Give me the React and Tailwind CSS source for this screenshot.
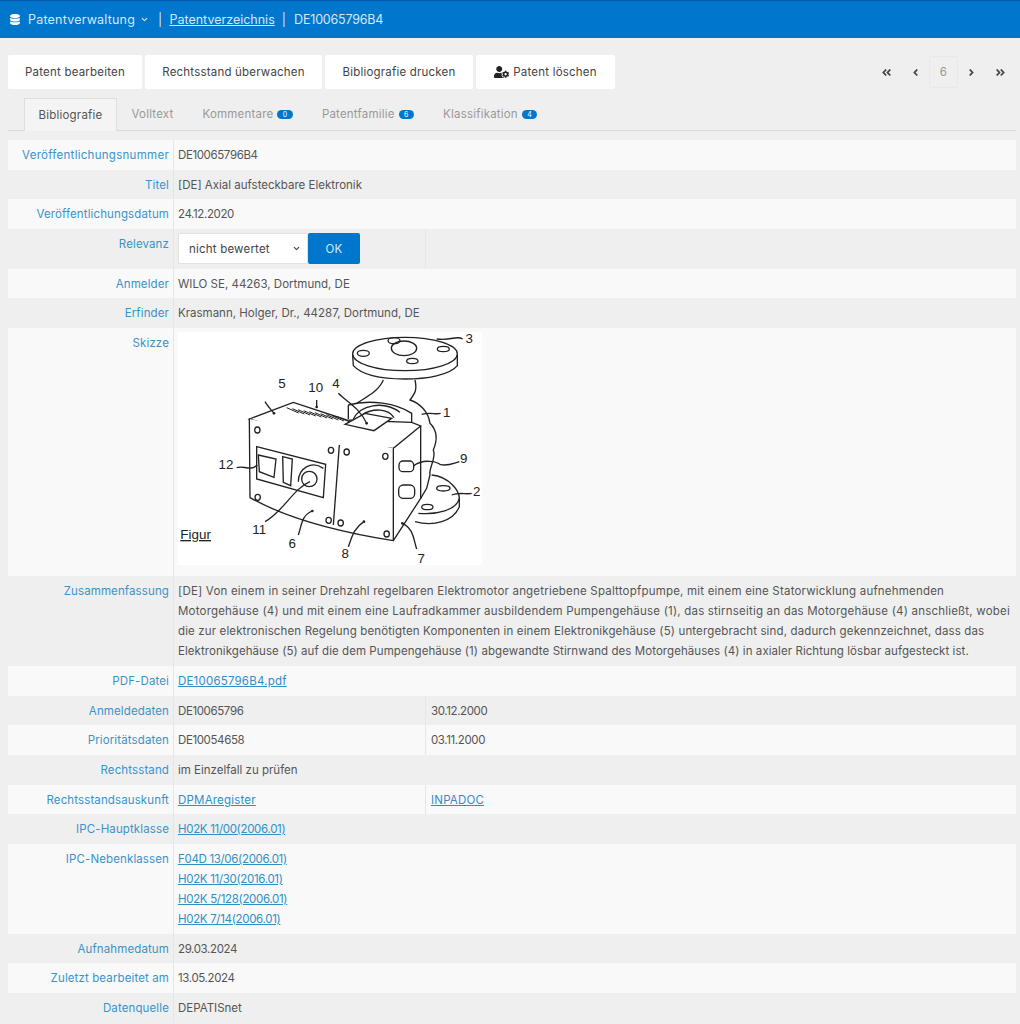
import { FaDatabase, FaUserCog, FaAngleDoubleLeft, FaAngleDoubleRight, FaAngleLeft, FaAngleRight } from "react-icons/fa";
import { ChevronDown } from "lucide-react";

const Link = ({ children, tight }) => <a className={`text-[#2f8fc8] underline ${tight ? "tracking-[-0.32px]" : ""}`}>{children}</a>;
const Num = ({ children }) => <span className="tracking-[-0.38px]">{children}</span>;
const Name = ({ children }) => <span className="tracking-[0px]">{children}</span>;

function Row({ label, odd, h, a, b, split }) {
  return (
    <div className={`grid grid-cols-[165px_253px_1fr] ${odd ? "bg-[#f9f9f9]" : "bg-[#efefef]"} ${h}`}>
      <div className="text-right text-[#3a93c9] pr-[4px] pt-[8px] tracking-[0.12px]">{label}</div>
      <div className={`border-l border-[#e6e6e6] pl-[4px] pt-[8px] ${split ? "border-r" : "col-span-2"}`}>{a}</div>
      {split && <div className="pl-[5px] pt-[8px]">{b}</div>}
    </div>
  );
}

function Sketch() {
  const vents = [0, 1, 2, 3, 4, 5, 6, 7, 8, 9];
  const holes = [[262, 315], [483, 376], [530, 381], [646, 394], [263, 517], [476, 586], [512, 594], [650, 627]];
  const labels = [["3", 898, 55], ["5", 336, 188], ["10", 437, 202], ["4", 498, 190], ["1", 830, 275], ["9", 881, 415], ["12", 168, 432], ["2", 920, 512], ["11", 268, 628], ["6", 367, 670], ["8", 526, 700], ["7", 754, 714]];
  return (
    <svg viewBox="24 21 912 699" className="w-[304px] h-[233px] bg-white block overflow-visible" fill="none" stroke="#222" strokeWidth="4">
      <ellipse cx="705" cy="87" rx="157" ry="50" />
      <path d="M548 90 L550 122 C580 155 650 162 705 162 C770 162 840 150 862 122 L862 90" />
      <ellipse cx="672" cy="47" rx="18" ry="9" />
      <ellipse cx="820" cy="72" rx="18" ry="8" />
      <ellipse cx="580" cy="85" rx="18" ry="9" />
      <ellipse cx="727" cy="108" rx="17" ry="8" />
      <ellipse cx="702" cy="70" rx="38" ry="22" />
      <path d="M640 165 C625 200 590 215 560 235" />
      <path d="M735 165 C742 195 735 205 720 225 C750 235 775 260 780 295 C800 315 805 340 790 375 C800 400 775 430 780 450 L770 490 L752 520" />
      <path d="M785 450 C840 455 868 500 868 520 L868 545 C850 590 790 605 735 590" />
      <path d="M868 520 C860 555 800 570 745 565" />
      <ellipse cx="820" cy="490" rx="20" ry="8" />
      <ellipse cx="772" cy="546" rx="17" ry="8" />
      <path d="M535 240 L535 282 M535 240 C600 222 680 235 725 265 L725 295" />
      <path d="M550 282 C570 240 640 225 690 262 M575 270 C610 248 655 250 672 278" />
      <path d="M238 282 L370 232 L530 285 L725 292 L752 303 L670 370 C520 360 350 320 238 282 Z" fill="#fff" />
      <path d="M525 298 L585 265 L665 280 L612 317 Z" fill="#fff" />
      <path d="M238 282 L240 518 C350 580 500 620 670 647 L670 370 M752 303 L752 520 L670 647" fill="#fff" />
      <path d="M508 360 L490 600" />
      {vents.map(i => <path key={i} d={`M${350 + i * 17} ${248 + i * 3} L${386 + i * 17} ${264 + i * 3}`} strokeWidth="3" />)}
      {holes.map(([x, y]) => <ellipse key={x} cx={x} cy={y} rx="8" ry="9" />)}
      <path d="M260 365 L467 418 L460 518 L260 462 Z" />
      <path d="M265 390 L318 402 L312 457 L268 440 Z" />
      <path d="M338 395 L367 402 L362 482 L340 472 Z" />
      <circle cx="418" cy="462" r="23" />
      <path d="M385 470 C385 430 425 405 460 430" />
      <rect x="687" y="408" width="44" height="32" rx="12" />
      <rect x="686" y="480" width="48" height="40" rx="14" />
      <path d="M878 42 C860 30 845 48 800 42 M312 265 C300 250 290 240 285 230 M440 245 L440 225 M590 295 C570 250 530 230 505 205 M812 265 C795 270 785 260 755 268 M730 423 C760 400 800 410 810 418 C830 425 850 415 868 410 M200 428 C220 420 240 440 262 420 M905 505 C890 510 870 500 845 510 M420 470 C370 490 340 560 285 590 M427 558 C395 570 395 600 385 630 M582 590 C550 610 545 640 535 665 M697 595 C730 610 730 640 740 672" />
      <g fill="#222" stroke="none" fontFamily="Liberation Sans, sans-serif" fontSize="40" textAnchor="middle">
        {labels.map(([t, x, y]) => <text key={t} x={x} y={y}>{t}</text>)}
        <text x="77" y="642" textDecoration="underline">Figur</text>
      </g>
      <g fill="#222" stroke="none">
        <circle cx="312" cy="265" r="4" /><circle cx="440" cy="246" r="4" /><circle cx="590" cy="295" r="4" /><circle cx="427" cy="558" r="4" /><circle cx="582" cy="590" r="4" /><circle cx="697" cy="595" r="4" />
      </g>
    </svg>
  );
}

export default function App() {
  const tabs = [["Volltext"], ["Kommentare", 0], ["Patentfamilie", 6], ["Klassifikation", 4]];
  return (
    <div className="w-[1020px] h-[1024px] overflow-hidden bg-[#efefef] text-[#555] text-[11.5px] leading-[14px] font-['Inter',sans-serif] tracking-[0.2px]">
      <div className="h-[38px] bg-[#0077cc] border-t border-[#0a55b0] flex items-center pl-[10px] text-[#d6e8f6] text-[12.5px]">
        <FaDatabase className="w-[10px] h-[11px] text-white mr-[8px]" />
        <span>Patentverwaltung</span>
        <ChevronDown className="w-[9px] h-[9px] ml-[5px]" strokeWidth={3} />
        <span className="ml-[9px]">|</span>
        <a className="ml-[7px] underline tracking-[0px]">Patentverzeichnis</a>
        <span className="ml-[7px]">|</span>
        <span className="ml-[8px] tracking-[-0.2px]">DE10065796B4</span>
      </div>

      <div className="flex items-center justify-between pl-[8px] pr-[14px] mt-[17px] h-[34px]">
        <div className="flex gap-[3px]">
          <button className="h-[34px] w-[134px] bg-white rounded-[2px] text-[#444]">Patent bearbeiten</button>
          <button className="h-[34px] w-[177px] bg-white rounded-[2px] text-[#444]">Rechtsstand überwachen</button>
          <button className="h-[34px] w-[148px] bg-white rounded-[2px] text-[#444]">Bibliografie drucken</button>
          <button className="h-[34px] w-[139px] bg-white rounded-[2px] text-[#444] flex items-center justify-center gap-[4px]">
            <FaUserCog className="w-[15px] h-[12px] text-[#222]" />Patent löschen
          </button>
        </div>
        <div className="flex items-center text-[#444]">
          <FaAngleDoubleLeft className="w-[11px] h-[11px]" />
          <FaAngleLeft className="w-[11px] h-[11px] ml-[18px]" />
          <span className="w-[29px] h-[32px] border border-[#e8e8e8] rounded-[2px] flex items-center justify-center text-[#999] ml-[8px]">6</span>
          <FaAngleRight className="w-[11px] h-[11px] ml-[8px]" />
          <FaAngleDoubleRight className="w-[11px] h-[11px] ml-[18px]" />
        </div>
      </div>

      <div className="flex mt-[9px] ml-[8px] mr-[4px] border-b border-[#d9d9d9] h-[33px] pl-[16px]">
        <div className="h-[33px] w-[93px] flex items-center justify-center bg-[#f4f4f4] border border-b-0 border-[#dedede] text-[#555]">Bibliografie</div>
        {tabs.map(([t, n]) => (
          <div key={t} className="flex items-center text-[#999] px-[14.5px]">
            {t}
            {n !== undefined && <span className="ml-[4px] w-[15.5px] h-[9px] rounded-full bg-[#0077cc] text-white text-[7px] leading-[9px] text-center">{n}</span>}
          </div>
        ))}
      </div>

      <div className="mt-[9px] ml-[8px] mr-[4px]">
        <Row odd h="h-[30px]" label={<span className="tracking-[0.28px]">Veröffentlichungsnummer</span>} a={<Num>DE10065796B4</Num>} />
        <Row h="h-[29px]" label="Titel" a={<Name>[DE] Axial aufsteckbare Elektronik</Name>} />
        <Row odd h="h-[30px]" label="Veröffentlichungsdatum" a={<Num>24.12.2020</Num>} />
        <Row h="h-[40px]" split label="Relevanz" a={
          <div className="flex -mt-[4px]">
            <div className="w-[130px] h-[31px] bg-white border border-[#e2e2e2] rounded-l-[2px] flex items-center justify-between pl-[10px] pr-[6px] text-[#444]">
              nicht bewertet<ChevronDown className="w-[9px] h-[9px]" strokeWidth={3} />
            </div>
            <div className="w-[52px] h-[31px] bg-[#0077cc] rounded-[2px] text-[#d6e8f6] flex items-center justify-center">OK</div>
          </div>
        } />
        <Row odd h="h-[29px]" label="Anmelder" a={<Name>WILO SE, 44263, Dortmund, DE</Name>} />
        <Row h="h-[30px]" label="Erfinder" a={<Name>Krasmann, Holger, Dr., 44287, Dortmund, DE</Name>} />
        <Row odd h="h-[248px]" label="Skizze" a={<div className="-mt-[4px]"><Sketch /></div>} />
        <Row h="h-[90px]" label="Zusammenfassung" a={
          <p className="leading-[20px] -mt-[3px] whitespace-nowrap">
            [DE] Von einem in seiner Drehzahl regelbaren Elektromotor angetriebene Spalttopfpumpe, mit einem eine Statorwicklung aufnehmenden<br />
            Motorgehäuse (4) und mit einem eine Laufradkammer ausbildendem Pumpengehäuse (1), das stirnseitig an das Motorgehäuse (4) anschließt, wobei<br />
            <span className="tracking-[0.135px]">die zur elektronischen Regelung benötigten Komponenten in einem Elektronikgehäuse (5) untergebracht sind, dadurch gekennzeichnet, dass das</span><br />
            <span className="tracking-[0.065px]">Elektronikgehäuse (5) auf die dem Pumpengehäuse (1) abgewandte Stirnwand des Motorgehäuses (4) in axialer Richtung lösbar aufgesteckt ist.</span>
          </p>
        } />
        <Row odd h="h-[30px]" label="PDF-Datei" a={<Link>DE10065796B4.pdf</Link>} />
        <Row h="h-[29px]" split label="Anmeldedaten" a={<Num>DE10065796</Num>} b={<Num>30.12.2000</Num>} />
        <Row odd h="h-[30px]" split label="Prioritätsdaten" a={<Num>DE10054658</Num>} b={<Num>03.11.2000</Num>} />
        <Row h="h-[30px]" label="Rechtsstand" a={<Name>im Einzelfall zu prüfen</Name>} />
        <Row odd h="h-[29px]" split label="Rechtsstandsauskunft" a={<Link>DPMAregister</Link>} b={<Link>INPADOC</Link>} />
        <Row h="h-[30px]" label="IPC-Hauptklasse" a={<Link tight>H02K 11/00(2006.01)</Link>} />
        <Row odd h="h-[90px]" label="IPC-Nebenklassen" a={
          <div className="flex flex-col gap-[6px] items-start">
            <Link tight>F04D 13/06(2006.01)</Link>
            <Link tight>H02K 11/30(2016.01)</Link>
            <Link tight>H02K 5/128(2006.01)</Link>
            <Link tight>H02K 7/14(2006.01)</Link>
          </div>
        } />
        <Row h="h-[29px]" label="Aufnahmedatum" a={<Num>29.03.2024</Num>} />
        <Row odd h="h-[30px]" label="Zuletzt bearbeitet am" a={<Num>13.05.2024</Num>} />
        <Row h="h-[29px]" label="Datenquelle" a={<Name>DEPATISnet</Name>} />
      </div>
    </div>
  );
}
